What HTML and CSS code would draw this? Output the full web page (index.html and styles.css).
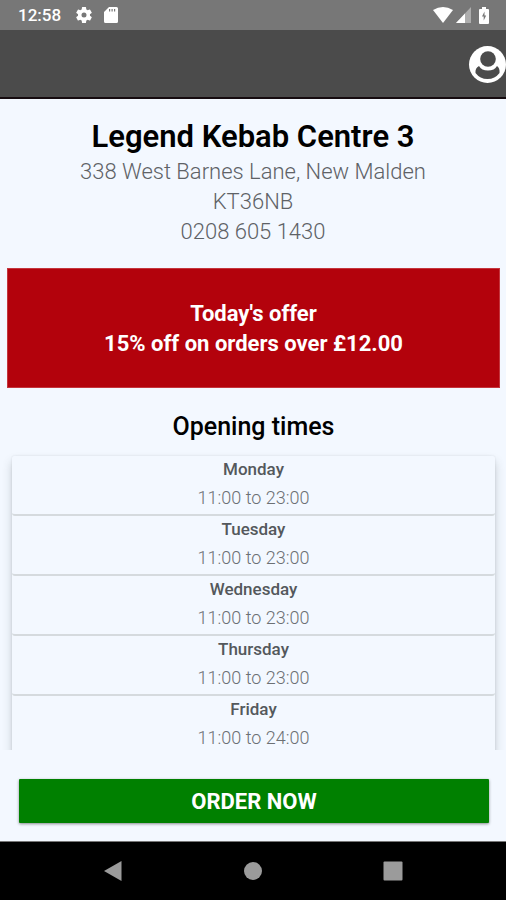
FILE: index.html
```html
<!DOCTYPE html>
<html lang="en">
<head>
<meta charset="utf-8">
<meta name="viewport" content="width=device-width, initial-scale=1">
<title>Legend Kebab Centre 3</title>
<link rel="stylesheet" href="styles.css">
</head>
<body>
<div class="status">
  <span class="clock">12:58</span>
  <svg class="icon" width="20" height="20" viewBox="0 0 24 24" aria-hidden="true"><path d="M19.14 12.94c.04-.3.06-.61.06-.94s-.02-.64-.07-.94l2.03-1.58a.49.49 0 0 0 .12-.61l-1.92-3.32a.49.49 0 0 0-.59-.22l-2.39.96c-.5-.38-1.03-.7-1.62-.94l-.36-2.54a.48.48 0 0 0-.48-.41h-3.84a.47.47 0 0 0-.47.41l-.36 2.54c-.59.24-1.13.57-1.62.94l-2.39-.96a.48.48 0 0 0-.59.22L2.74 8.87c-.12.21-.08.47.12.61l2.03 1.58c-.05.3-.09.63-.09.94s.02.64.07.94l-2.03 1.58a.49.49 0 0 0-.12.61l1.92 3.32c.12.22.37.29.59.22l2.39-.96c.5.38 1.03.7 1.62.94l.36 2.54c.05.24.24.41.48.41h3.84c.24 0 .44-.17.47-.41l.36-2.54c.59-.24 1.13-.56 1.62-.94l2.39.96c.22.08.47 0 .59-.22l1.92-3.32a.48.48 0 0 0-.12-.61zM12 15a3 3 0 1 1 0-6 3 3 0 0 1 0 6z"/></svg>
  <svg class="icon card" width="14" height="16" viewBox="0 0 14 16" aria-hidden="true"><path fill-rule="evenodd" d="M5 0h7.500Q14 0 14 1.500v13Q14 16 12.500 16h-11Q0 16 0 14.500V5zM5 2v2.500h1.200V2zm2.500 0v2.500h1.200V2zM10 2v2.500h1.200V2z"/></svg>
  <span class="spacer"></span>
  <svg class="icon" width="20" height="16" viewBox="0 0 20 16" aria-hidden="true"><path d="M0 3Q10-3 20 3L10 16z"/></svg>
  <svg class="icon signal" width="15" height="16" viewBox="0 0 15 16" aria-hidden="true"><path d="M15 0v16H0z" opacity=".4"/><path d="M9 6.400V16H0z"/></svg>
  <svg class="icon battery" width="10" height="17" viewBox="0 0 10 17" aria-hidden="true"><path fill-rule="evenodd" d="M3 0h4v2h2q1 0 1 1v13q0 1-1 1H1q-1 0-1-1V3q0-1 1-1h2zM5.500 4.500L3 9.500h1.700v4L7.200 8.500H5.500z"/></svg>
</div>
<header class="bar">
  <button class="account" type="button" aria-label="Account">
    <svg width="38" height="38" viewBox="0 0 38 38" aria-hidden="true"><circle cx="19.500" cy="19.500" r="18.500" fill="#fff"/><path fill="#4b4b4b" d="M11 21q2.500 4.500 9 4.500t9-4.500Q32 23 31.500 28q-4.500 6-12 6t-12-6Q7 23 11 21z"/><circle cx="20" cy="14" r="7.800" fill="#4b4b4b"/></svg>
  </button>
</header>
<main class="content">
  <section class="shop">
    <h1>Legend Kebab Centre 3</h1>
    <address>338 West Barnes Lane, New Malden<br>KT36NB<br>0208 605 1430</address>
  </section>
  <section class="offer">
    <p>Today's offer</p>
    <p>15% off on orders over £12.00</p>
  </section>
  <section class="opening">
    <h2>Opening times</h2>
    <ul class="days">
      <li><h3>Monday</h3><p>11:00 to 23:00</p></li>
      <li><h3>Tuesday</h3><p>11:00 to 23:00</p></li>
      <li><h3>Wednesday</h3><p>11:00 to 23:00</p></li>
      <li><h3>Thursday</h3><p>11:00 to 23:00</p></li>
      <li><h3>Friday</h3><p>11:00 to 24:00</p></li>
    </ul>
  </section>
</main>
<footer class="action"><button class="order" type="button">ORDER NOW</button></footer>
<nav class="system">
  <button type="button" aria-label="Back"><svg width="20" height="22" viewBox="0 0 20 22"><path d="M18.500 1v20L1 11z"/></svg></button>
  <button type="button" aria-label="Home"><svg width="20" height="20" viewBox="0 0 20 20"><circle cx="10" cy="10" r="9"/></svg></button>
  <button type="button" aria-label="Recent apps"><svg width="20" height="20" viewBox="0 0 20 20"><rect x=".5" y=".5" width="19" height="19" rx="1"/></svg></button>
</nav>
</body>
</html>
```

FILE: styles.css
```css
* { box-sizing: border-box; margin: 0; padding: 0; }

body {
  display: flex;
  flex-direction: column;
  height: 100vh;
  background: #f3f8ff;
  color: #000;
  font-family: Roboto, "Liberation Sans", sans-serif;
  text-align: center;
}

button { border: 0; background: none; font-family: inherit; cursor: pointer; }
svg { display: block; }

.status {
  display: flex;
  align-items: center;
  height: 30px;
  padding: 0 17px 0 18px;
  background: #777;
  color: #fff;
}
.clock { margin-right: 13px; font-size: 17px; font-weight: 500; line-height: 32px; }
.icon { fill: #fff; }
.card { margin-left: 10px; }
.spacer { flex: 1; }
.signal { margin-left: 3px; }
.battery { margin-left: 8px; }

.bar {
  display: flex;
  align-items: center;
  justify-content: flex-end;
  height: 69px;
  border-bottom: 2px solid #160c10;
  background: #4b4b4b;
}

.content {
  flex: 1;
  min-height: 0;
  overflow-y: auto;
  scrollbar-width: none;
}

.shop { padding: 18px 8px 21px; }
h1 { font-size: 31px; font-weight: 600; line-height: 40px; }
address {
  color: #5e6266;
  font-size: 22px;
  font-style: normal;
  font-weight: 300;
  line-height: 30px;
}

.offer {
  margin: 0 6px 0 7px;
  padding: 30px 8px 28px;
  border: 1px solid #c4353d;
  background: #b3020c;
  color: #fff;
  font-size: 22px;
  font-weight: 700;
  line-height: 30px;
}

.opening { padding: 23px 11px 0 12px; }
h2 { padding-bottom: 13px; font-size: 25px; font-weight: 500; line-height: 32px; }

.days {
  list-style: none;
  border-radius: 3px;
  box-shadow: 0 6px 10px rgba(60, 70, 75, .25), 0 0 2px rgba(60, 70, 75, .15);
}
.days li {
  height: 60px;
  border-bottom: 2px solid #d5dade;
  border-radius: 3px;
  background: #f3f8ff;
}
h3 { color: #54585c; font-size: 17px; font-weight: 500; line-height: 26px; }
.days p { color: #6c7074; font-size: 18px; font-weight: 300; line-height: 32px; }

.action { padding: 29px 17px 18px 19px; }
.order {
  display: block;
  width: 100%;
  height: 44px;
  padding-top: 2px;
  border-radius: 1px;
  background: #008000;
  box-shadow: 0 1px 3px rgba(0, 0, 0, .45);
  color: #fff;
  font-size: 22px;
  font-weight: 700;
  line-height: 42px;
}

.system {
  display: flex;
  align-items: center;
  justify-content: center;
  gap: 120px;
  height: 59px;
  border-top: 1px solid #777;
  background: #000;
}
.system button { display: grid; place-items: center; width: 20px; height: 24px; }
.system svg { fill: #9b9b9b; }
```
